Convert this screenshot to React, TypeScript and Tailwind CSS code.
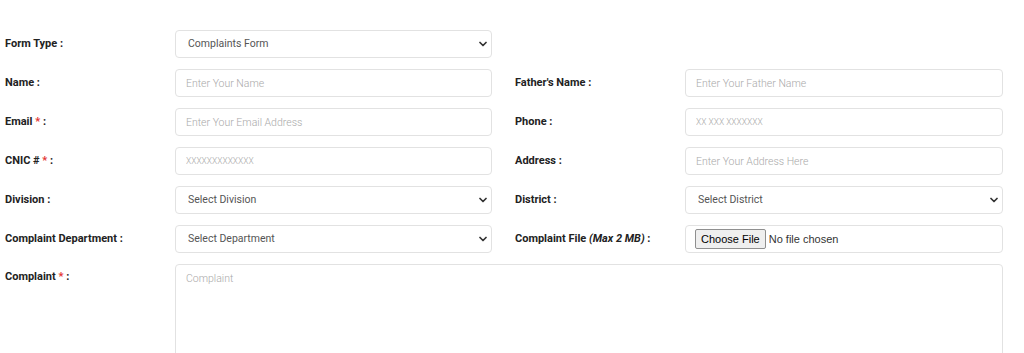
import { ReactNode } from 'react'

const font = { fontFamily: 'Roboto, "Liberation Sans", sans-serif' }

function Chevron() {
  return (
    <svg
      className="pointer-events-none absolute right-[5px] top-1/2 -translate-y-1/2"
      width="8"
      height="6"
      viewBox="0 0 8 6"
      fill="none"
    >
      <path d="M1 1.5l3 3 3-3" stroke="#333" strokeWidth="1.7" strokeLinecap="round" strokeLinejoin="round" />
    </svg>
  )
}

function Label({ children }: { children: ReactNode }) {
  return (
    <label className="block w-[170px] shrink-0 text-[11px] font-bold text-[#222] leading-4">
      {children}
    </label>
  )
}

function Req() {
  return <span className="text-[#e3342f]"> *</span>
}

function TextInput({ placeholder, small }: { placeholder: string; small?: boolean }) {
  return (
    <input
      type="text"
      placeholder={placeholder}
      className={
        'h-[28px] w-full rounded-[4px] border border-[#e2e2e2] bg-white px-[10px] text-[#555] outline-none placeholder:text-[#a9a9a9] placeholder:font-light ' +
        (small ? 'text-[8.5px]' : 'text-[10.5px]')
      }
    />
  )
}

function Select({ value }: { value: string }) {
  return (
    <div className="relative w-full">
      <select
        defaultValue={value}
        className="h-[28px] w-full appearance-none rounded-[4px] border border-[#e2e2e2] bg-white pl-[12px] text-[10.5px] text-[#555] outline-none"
      >
        <option>{value}</option>
      </select>
      <Chevron />
    </div>
  )
}

function Row({ children }: { children: ReactNode }) {
  return <div className="flex items-center">{children}</div>
}

export default function App() {
  return (
    <div style={font} className="min-h-[353px] w-[1024px] overflow-hidden bg-white pl-[5px] pr-[21px] pt-[30px]">
      <div className="flex flex-col gap-[11px]">
        <div className="flex items-center">
          <Label>Form Type :</Label>
          <div className="w-[317px]">
            <Select value="Complaints Form" />
          </div>
        </div>

        <div className="flex gap-[23px]">
          <Row>
            <Label>Name :</Label>
            <div className="w-[317px]"><TextInput placeholder="Enter Your Name" /></div>
          </Row>
          <Row>
            <Label>Father's Name :</Label>
            <div className="w-[318px]"><TextInput placeholder="Enter Your Father Name" /></div>
          </Row>
        </div>

        <div className="flex gap-[23px]">
          <Row>
            <Label>Email<Req /> :</Label>
            <div className="w-[317px]"><TextInput placeholder="Enter Your Email Address" /></div>
          </Row>
          <Row>
            <Label>Phone :</Label>
            <div className="w-[318px]"><TextInput placeholder="XX XXX XXXXXXX" small /></div>
          </Row>
        </div>

        <div className="flex gap-[23px]">
          <Row>
            <Label>CNIC #<Req /> :</Label>
            <div className="w-[317px]"><TextInput placeholder="XXXXXXXXXXXXX" small /></div>
          </Row>
          <Row>
            <Label>Address :</Label>
            <div className="w-[318px]"><TextInput placeholder="Enter Your Address Here" /></div>
          </Row>
        </div>

        <div className="flex gap-[23px]">
          <Row>
            <Label>Division :</Label>
            <div className="w-[317px]"><Select value="Select Division" /></div>
          </Row>
          <Row>
            <Label>District :</Label>
            <div className="w-[318px]"><Select value="Select District" /></div>
          </Row>
        </div>

        <div className="flex gap-[23px]">
          <Row>
            <Label>Complaint Department :</Label>
            <div className="w-[317px]"><Select value="Select Department" /></div>
          </Row>
          <Row>
            <Label>
              Complaint File <i>(Max 2 MB)</i> :
            </Label>
            <div className="flex h-[28px] w-[318px] items-center rounded-[4px] border border-[#e2e2e2] bg-white pl-[9px]">
              <input
                type="file"
                className="text-[11px] text-[#333] file:mr-[3px] file:rounded-[2px] file:border file:border-[#8f8f8f] file:bg-[#efefef] file:px-[5px] file:py-[1px] file:text-[11px] file:text-black"
                style={{ fontFamily: '"Liberation Sans", Arial, sans-serif' }}
              />
            </div>
          </Row>
        </div>

        <div className="flex items-start">
          <div className="w-[170px] shrink-0 pt-[5px]">
            <Label>Complaint<Req /> :</Label>
          </div>
          <textarea
            placeholder="Complaint"
            className="h-[120px] w-[828px] resize-none rounded-[4px] border border-[#e2e2e2] bg-white px-[10px] py-[6px] text-[10.5px] text-[#555] outline-none placeholder:text-[#a9a9a9] placeholder:font-light"
          />
        </div>
      </div>
    </div>
  )
}
